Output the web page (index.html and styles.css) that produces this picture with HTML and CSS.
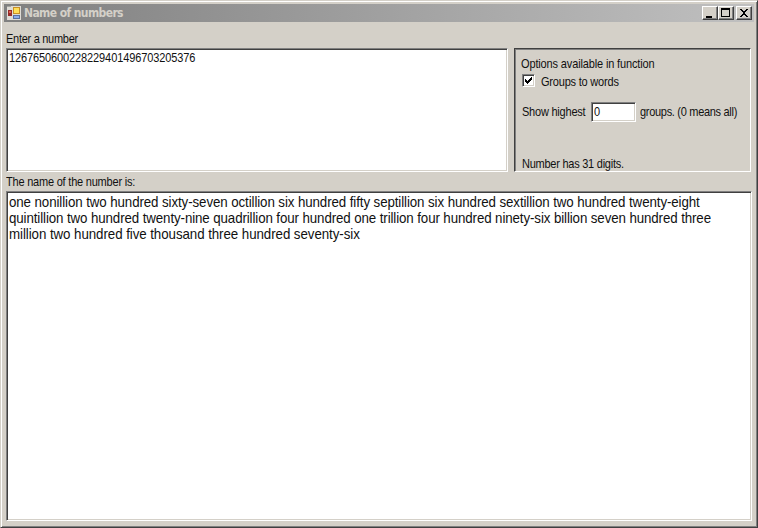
FILE: index.html
```html
<!DOCTYPE html>
<html lang="en">
<head>
<meta charset="utf-8">
<title>Name of numbers</title>
<link rel="stylesheet" href="styles.css">
</head>
<body>
<main class="window">
  <header class="titlebar">
    <svg class="app-icon" width="14" height="14" viewBox="0 0 14 14" shape-rendering="crispEdges">
      <path fill="#dedbd5" d="M0 0h14v14H0z"/>
      <path fill="#a6a6a0" d="M0 0h4v1H0z"/>
      <path fill="#982b28" d="M1 4h4v6H1z"/><path fill="#e06454" d="M2 5h2v2H2z"/>
      <path fill="#c98f25" d="M6 1h7v7H6z"/><path fill="#ffdf58" d="M7 2h5v5H7z"/>
      <path fill="#59709f" d="M6 9h7v4H6z"/><path fill="#8cacec" d="M7 10h5v2H7z"/>
    </svg>
    <h1 class="title">Name of numbers</h1>
    <div class="controls">
      <button class="control" aria-label="Minimize"><svg width="14" height="12" shape-rendering="crispEdges"><path d="M3 9h6v2H3z"/></svg></button>
      <button class="control" aria-label="Maximize"><svg width="14" height="12" shape-rendering="crispEdges"><path fill-rule="evenodd" d="M2 1h9v9H2zM3 3v6h7V3z"/></svg></button>
      <button class="control close" aria-label="Close"><svg width="14" height="12" shape-rendering="crispEdges"><path d="M3 2h2v1h1v1h2V3h1V2h2v1h-1v1H9v1H8v2h1v1h1v1h1v1H9V9H8V8H6v1H5v1H3V9h1V8h1V7h1V5H5V4H4V3H3z"/></svg></button>
    </div>
  </header>
  <div class="content">
    <div class="label enter"><span class="text t-enter">Enter a number</span></div>
    <div class="top-row">
      <div class="field number"><span class="text t-number">1267650600228229401496703205376</span></div>
      <section class="options">
        <div class="heading"><span class="text t-options">Options available in function</span></div>
        <div class="check-row">
          <span class="checkbox"><svg width="9" height="9" shape-rendering="crispEdges"><path d="M1 3h1v1h1v1h1V4h1V3h1V2h1V1h1v3H7v1H6v1H5v1H4v1H3V7H2V6H1z"/></svg></span>
          <span class="text t-groups">Groups to words</span>
        </div>
        <div class="show-row">
          <span class="show"><span class="text t-show">Show highest</span></span>
          <span class="field small"><span class="text">0</span></span>
          <span class="text t-means">groups. (0 means all)</span>
        </div>
        <div class="digits"><span class="text t-digits">Number has 31 digits.</span></div>
      </section>
    </div>
    <div class="label result"><span class="text t-result">The name of the number is:</span></div>
    <div class="field output">
      <div class="line one">one nonillion two hundred sixty-seven octillion six hundred fifty septillion six hundred sextillion two hundred twenty-eight</div>
      <div class="line two">quintillion two hundred twenty-nine quadrillion four hundred one trillion four hundred ninety-six billion seven hundred three</div>
      <div class="line three">million two hundred five thousand three hundred seventy-six</div>
    </div>
  </div>
</main>
</body>
</html>
```
FILE: styles.css
```css
* { box-sizing: border-box; }
body { margin: 0; overflow: hidden; }
.window {
  width: 758px; height: 528px; padding: 2px;
  background: #d4d0c8;
  border: 1px solid; border-color: #d4d0c8 #404040 #404040 #d4d0c8;
  box-shadow: inset 1px 1px #fff, inset -1px -1px #808080;
  color: #111; font: 11px/14px "Liberation Sans", Arial, sans-serif;
  white-space: nowrap;
}
.text { display: inline-block; transform: scaleY(1.1); }
.t-enter { letter-spacing: -0.28px; }
.t-number { letter-spacing: -0.11px; }
.t-options { letter-spacing: -0.14px; }
.t-groups { letter-spacing: -0.2px; }
.t-show { letter-spacing: -0.22px; }
.t-means { letter-spacing: -0.3px; }
.t-digits { letter-spacing: -0.25px; }
.t-result { letter-spacing: -0.21px; }
.titlebar {
  display: flex; align-items: center; height: 18px; margin: 1px 1px 0;
  padding: 0 2px 0 3px;
  background: linear-gradient(90deg, #808080, #c0c0c0);
}
.app-icon { flex: none; }
.title {
  margin: 0 0 0 3px; color: #d4d0c8;
  font: bold 12px/16px "DejaVu Sans Condensed", "DejaVu Sans", sans-serif; letter-spacing: -0.6px;
}
.controls { display: flex; margin-left: auto; }
.control {
  width: 16px; height: 14px; padding: 0; background: #d4d0c8;
  border: 1px solid; border-color: #fff #404040 #404040 #fff;
  box-shadow: inset -1px -1px #808080;
}
.control svg { display: block; }
.close { margin-left: 2px; }
.content { padding: 0 3px; }
.label { display: flex; align-items: center; }
.enter { height: 26px; padding-top: 8px; }
.result { height: 19px; padding-top: 1px; }
.top-row { display: flex; gap: 6px; height: 124px; }
.field {
  background: #fff;
  border: 1px solid; border-color: #808080 #fff #fff #808080;
  box-shadow: inset 1px 1px #404040, inset -1px -1px #d4d0c8;
}
.number { width: 502px; padding: 2px; }
.options {
  width: 237px; padding: 8px 0 0 6px;
  border: 1px solid; border-color: #404040 #fff #fff #404040;
  box-shadow: inset 1px 1px #808080;
}
.heading { height: 16px; }
.check-row { display: flex; height: 18px; padding-top: 1px; line-height: 16px; }
.checkbox {
  width: 13px; height: 13px; margin: 0 6px 0 1px; padding: 1px;
  background: #fff; border: 1px solid; border-color: #808080 #fff #fff #808080;
  box-shadow: inset 1px 1px #404040, inset -1px -1px #d4d0c8;
}
.checkbox svg { display: block; }
.show-row { display: flex; align-items: center; height: 20px; margin: 11px 0 0 1px; }
.show { width: 69px; }
.small { width: 45px; height: 20px; padding: 2px; margin-right: 4px; }
.digits { margin: 35px 0 0 1px; }
.output {
  height: 330px; padding: 3px 2px 2px;
  font-size: 13.33px; line-height: 16px;
}
.line { transform: scaleY(1.05); }
.one { letter-spacing: -0.1px; }
.two { letter-spacing: -0.11px; }
.three { letter-spacing: -0.07px; }
```
